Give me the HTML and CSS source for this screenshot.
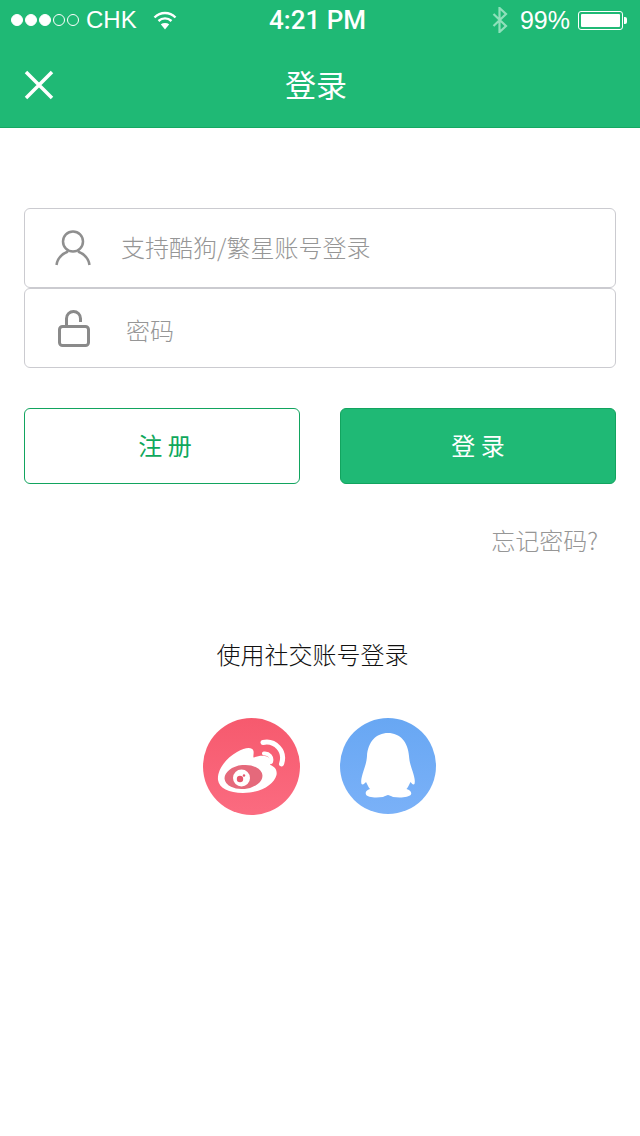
FILE: index.html
```html
<!DOCTYPE html>
<html lang="zh">
<head>
    <meta charset="UTF-8">
    <meta name="viewport" content="width=device-width, initial-scale=1.0">
    <title>登录</title>
    <link rel="stylesheet" href="styles.css">
</head>
<body>
    <header class="topBar">
        <div class="statusBar">
            <div class="statusLeft">
                <span class="dots">
                    <i class="dot"></i><i class="dot"></i><i class="dot"></i><i class="dot off"></i><i class="dot off"></i>
                </span>
                <span class="carrier">CHK</span>
                <svg class="wifi" width="24" height="20" viewBox="0 0 24 20" fill="none" stroke="#fff" stroke-width="2.4">
                    <path d="M1.500 7.500C7.500 1.500 16.500 1.500 22.500 7.500"/>
                    <path d="M5.500 11C9.300 7.500 14.700 7.500 18.500 11"/>
                    <path d="M12 19.500L7.800 14.300C10.300 12.500 13.700 12.500 16.200 14.300Z" fill="#fff" stroke="none"/>
                </svg>
            </div>
            <div class="clock">4:21 PM</div>
            <div class="statusRight">
                <svg class="bluetooth" width="16" height="26" viewBox="0 0 16 26" fill="none" stroke="#8fe0bb" stroke-width="2.200">
                    <path d="M1.500 7L14 19 7.500 25V1L14 7 1.500 19"/>
                </svg>
                <span class="battery">99%</span>
                <span class="batteryBody"><span class="batteryFill"></span></span>
                <span class="batteryCap"></span>
            </div>
        </div>
        <div class="navBar">
            <svg class="closeIcon" width="30" height="30" viewBox="0 0 30 30" stroke="#fff" stroke-width="3.500">
                <path d="M2 2L28 28M28 2L2 28"/>
            </svg>
            <h1 class="navTitle">登录</h1>
        </div>
    </header>

    <main class="content">
        <form class="loginForm" action="">
            <div class="inputRow">
                <svg class="rowIcon" width="38" height="38" viewBox="0 0 38 38" fill="none" stroke="#8f8f8f" stroke-width="2.500">
                    <circle cx="18" cy="12.500" r="10"/>
                    <path d="M1.500 36C2.500 29 8 24.500 13 22.500M34.500 36C33.500 29 28 24.500 23 22.500"/>
                </svg>
                <span class="placeholder">支持酷狗/繁星账号登录</span>
            </div>
            <div class="inputRow second">
                <svg class="rowIcon" width="38" height="38" viewBox="0 0 38 38" fill="none" stroke="#8a8a8a" stroke-width="3">
                    <path d="M11.500 16V9.500A7 7 0 0 1 25.500 9.500V13"/>
                    <rect x="4.500" y="17.500" width="29" height="19" rx="3"/>
                </svg>
                <span class="placeholder pass">密码</span>
            </div>

            <div class="buttons">
                <button class="btn btnOutline" type="button">注 册</button>
                <button class="btn btnFull" type="button">登 录</button>
            </div>
            <div class="forgot">忘记密码?</div>
        </form>

        <p class="socialTitle">使用社交账号登录</p>
        <div class="socialRow">
            <svg class="socialIcon weibo" width="97" height="97" viewBox="0 0 97 97">
                <defs>
                    <linearGradient id="wbBg" x1="0" y1="0" x2="0" y2="1">
                        <stop offset="0" stop-color="#f65a6e"/>
                        <stop offset="1" stop-color="#fb6b80"/>
                    </linearGradient>
                </defs>
                <circle cx="48.500" cy="48.500" r="48.500" fill="url(#wbBg)"/>
                <path d="M15 62C14 52 23 40 34 34C42 29.500 49 28.500 50.500 33C51 36 50 38 50.500 39.500C57 37 65 37 67 41C68 44 66.500 46 67.500 47C71 48.500 74.500 51 73.500 57C71 67 57 75 40 75C26 75 16 70 15 62Z" fill="#fff"/>
                <ellipse cx="40.500" cy="59" rx="19" ry="12" fill="#e5697b" transform="rotate(-6 40.500 59)"/>
                <circle cx="38.500" cy="60" r="8.500" fill="#fff"/>
                <circle cx="37" cy="61" r="3.200" fill="#e5566c"/>
                <circle cx="41" cy="57.500" r="1.200" fill="#e5566c"/>
                <path d="M61 35.500C66 35 69.500 39 68 44" fill="none" stroke="#fff" stroke-width="4" stroke-linecap="round"/>
                <path d="M60 24.500C72 22 83 33 78.500 46" fill="none" stroke="#fff" stroke-width="5" stroke-linecap="round"/>
            </svg>
            <svg class="socialIcon qq" width="96" height="96" viewBox="0 0 96 96">
                <defs>
                    <linearGradient id="qqBg" x1="0" y1="0" x2="0" y2="1">
                        <stop offset="0" stop-color="#68a7f3"/>
                        <stop offset="1" stop-color="#7ab1f8"/>
                    </linearGradient>
                </defs>
                <circle cx="48" cy="48" r="48" fill="url(#qqBg)"/>
                <path d="M48 15C60 15 68 24 69 38C69.500 45 71 48 72.500 53C74 58 75.500 62 74.500 66C73 67.500 71.500 65 70.500 64C69.500 66 68.500 68.500 66.500 71C70 72 72 74 71 76.500C69 79.500 60 80 53 79C51 78 49 77 48 77C47 77 45 78 43 79C36 80 27 79.500 26 76.500C25 74 26.500 72 30 71C28 68.500 27 66 26 64C25 65 23 67.500 21.500 66C20.500 62 22 58 23.500 53C25 48 26.500 45 27 38C28 24 36 15 48 15Z" fill="#fff"/>
            </svg>
        </div>
    </main>
</body>
</html>
```

FILE: styles.css
```css
* {
    box-sizing: border-box;
}
body {
    margin: 0;
    background: #fff;
    font-family: "Liberation Sans", "Noto Sans CJK SC", sans-serif;
}

.topBar {
    height: 128px;
    background-color: #1fb975;
    border-bottom: 1px solid #15a862;
    color: #fff;
}
.statusBar {
    height: 40px;
    display: grid;
    grid-template-columns: 1fr auto 1fr;
    align-items: center;
    padding: 0 13px 0 11px;
    font-size: 25px;
}
.statusLeft {
    display: flex;
    align-items: center;
}
.dots {
    display: flex;
    gap: 2px;
}
.dot {
    width: 12px;
    height: 12px;
    border-radius: 50%;
    background: #fff;
    border: 1px solid #fff;
}
.dot.off {
    background: none;
}
.carrier {
    margin-left: 7px;
    font-size: 24px;
}
.wifi {
    margin-left: 16px;
}
.clock {
    font-family: Roboto, sans-serif;
    font-weight: 500;
    font-size: 26px;
    padding-right: 3px;
}
.statusRight {
    display: flex;
    align-items: center;
    justify-content: flex-end;
}
.bluetooth {
    margin-right: 12px;
}
.battery {
    margin-right: 8px;
}
.batteryBody {
    width: 45px;
    height: 19px;
    border: 1px solid #fff;
    border-radius: 3px;
    padding: 2px;
    display: flex;
}
.batteryFill {
    flex: 1;
    background: #fff;
    border-radius: 1px;
}
.batteryCap {
    width: 3px;
    height: 7px;
    background: #fff;
    border-radius: 0 2px 2px 0;
    margin-left: 1px;
}

.navBar {
    height: 87px;
    position: relative;
    display: flex;
    align-items: center;
    justify-content: center;
    padding-right: 8px;
}
.navTitle {
    margin: 0;
    font-family: "Noto Sans CJK SC", sans-serif;
    font-size: 31px;
    font-weight: normal;
}
.closeIcon {
    position: absolute;
    left: 24px;
    top: 30px;
}

.content {
    padding: 80px 24px 0;
}
.inputRow {
    height: 80px;
    border: 1px solid #cbcbd0;
    border-radius: 6px;
    background: #fff;
    display: flex;
    align-items: center;
    padding-left: 30px;
}
.rowIcon {
    flex: none;
}
.placeholder {
    margin-left: 28px;
    margin-bottom: 4px;
    font-family: "Noto Sans CJK SC", sans-serif;
    font-size: 24px;
    font-weight: 300;
    color: #969696;
}
.placeholder.pass {
    margin-left: 33px;
    margin-bottom: 0;
    margin-top: 2px;
}
.buttons {
    display: flex;
    justify-content: space-between;
    margin-top: 40px;
}
.btn {
    width: 276px;
    height: 76px;
    border-radius: 6px;
    border: 1px solid #12a45f;
    font-family: "Noto Sans CJK SC", sans-serif;
    font-size: 24px;
    padding: 0 0 3px;
}
.btnOutline {
    background: #fff;
    color: #0fa85c;
    padding-left: 6px;
}
.btnFull {
    background-color: #1fb975;
    color: #fff;
}
.forgot {
    margin-top: 38px;
    padding-right: 18px;
    text-align: right;
    font-family: "Noto Sans CJK SC", sans-serif;
    font-size: 24px;
    font-weight: 300;
    line-height: 36px;
    color: #969696;
}
.socialTitle {
    margin: 78px 0 0;
    text-align: center;
    padding-right: 15px;
    font-family: "Noto Sans CJK SC", sans-serif;
    font-size: 24px;
    font-weight: 300;
    line-height: 36px;
    color: #111;
}
.socialRow {
    display: flex;
    justify-content: center;
    gap: 40px;
    margin-top: 46px;
    padding-right: 2px;
}
```
